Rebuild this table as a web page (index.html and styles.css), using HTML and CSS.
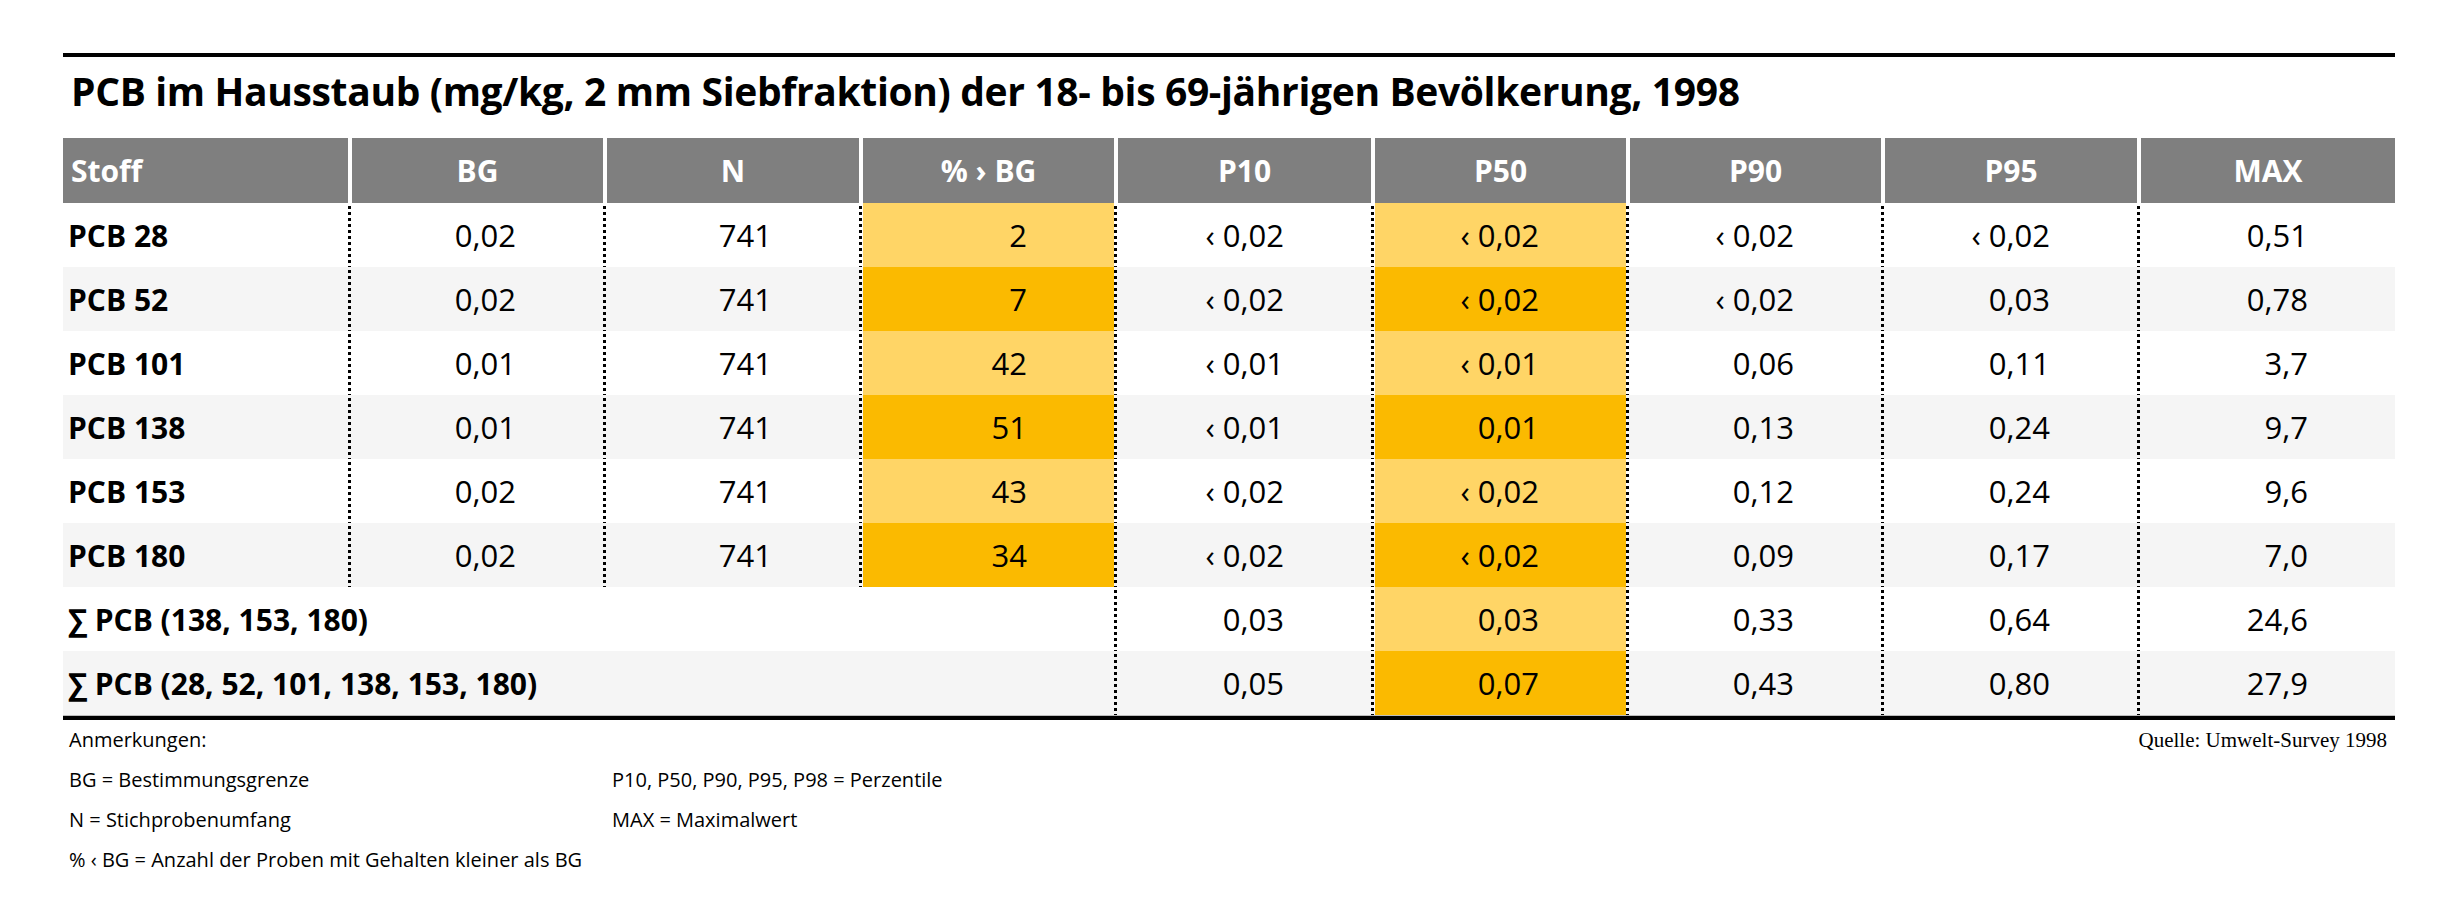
FILE: index.html
```html
<!DOCTYPE html>
<html lang="de">
<head>
<meta charset="utf-8">
<title>PCB im Hausstaub</title>
<link rel="stylesheet" href="styles.css">
</head>
<body>
<div class="page">
  <div class="rule-top"></div>
  <h1 class="title">PCB im Hausstaub (mg/kg, 2 mm Siebfraktion) der 18- bis 69-jährigen Bevölkerung, 1998</h1>

  <div class="table">
    <div class="row head">
      <div class="hc first">Stoff</div>
      <div class="hc">BG</div>
      <div class="hc">N</div>
      <div class="hc">% › BG</div>
      <div class="hc">P10</div>
      <div class="hc">P50</div>
      <div class="hc">P90</div>
      <div class="hc">P95</div>
      <div class="hc">MAX</div>
    </div>

    <div class="row">
      <div class="c name">PCB 28</div>
      <div class="c sep">0,02</div>
      <div class="c sep">741</div>
      <div class="c sep light">2</div>
      <div class="c sep">‹ 0,02</div>
      <div class="c sep light">‹ 0,02</div>
      <div class="c sep">‹ 0,02</div>
      <div class="c sep">‹ 0,02</div>
      <div class="c sep">0,51</div>
    </div>
    <div class="row alt">
      <div class="c name">PCB 52</div>
      <div class="c sep">0,02</div>
      <div class="c sep">741</div>
      <div class="c sep dark">7</div>
      <div class="c sep">‹ 0,02</div>
      <div class="c sep dark">‹ 0,02</div>
      <div class="c sep">‹ 0,02</div>
      <div class="c sep">0,03</div>
      <div class="c sep">0,78</div>
    </div>
    <div class="row">
      <div class="c name">PCB 101</div>
      <div class="c sep">0,01</div>
      <div class="c sep">741</div>
      <div class="c sep light">42</div>
      <div class="c sep">‹ 0,01</div>
      <div class="c sep light">‹ 0,01</div>
      <div class="c sep">0,06</div>
      <div class="c sep">0,11</div>
      <div class="c sep">3,7</div>
    </div>
    <div class="row alt">
      <div class="c name">PCB 138</div>
      <div class="c sep">0,01</div>
      <div class="c sep">741</div>
      <div class="c sep dark">51</div>
      <div class="c sep">‹ 0,01</div>
      <div class="c sep dark">0,01</div>
      <div class="c sep">0,13</div>
      <div class="c sep">0,24</div>
      <div class="c sep">9,7</div>
    </div>
    <div class="row">
      <div class="c name">PCB 153</div>
      <div class="c sep">0,02</div>
      <div class="c sep">741</div>
      <div class="c sep light">43</div>
      <div class="c sep">‹ 0,02</div>
      <div class="c sep light">‹ 0,02</div>
      <div class="c sep">0,12</div>
      <div class="c sep">0,24</div>
      <div class="c sep">9,6</div>
    </div>
    <div class="row alt">
      <div class="c name">PCB 180</div>
      <div class="c sep">0,02</div>
      <div class="c sep">741</div>
      <div class="c sep dark">34</div>
      <div class="c sep">‹ 0,02</div>
      <div class="c sep dark">‹ 0,02</div>
      <div class="c sep">0,09</div>
      <div class="c sep">0,17</div>
      <div class="c sep">7,0</div>
    </div>
    <div class="row">
      <div class="c name span4">∑ PCB (138, 153, 180)</div>
      <div class="c sep">0,03</div>
      <div class="c sep light">0,03</div>
      <div class="c sep">0,33</div>
      <div class="c sep">0,64</div>
      <div class="c sep">24,6</div>
    </div>
    <div class="row alt">
      <div class="c name span4">∑ PCB (28, 52, 101, 138, 153, 180)</div>
      <div class="c sep">0,05</div>
      <div class="c sep dark">0,07</div>
      <div class="c sep">0,43</div>
      <div class="c sep">0,80</div>
      <div class="c sep">27,9</div>
    </div>
    <div class="rule-bottom"></div>
  </div>

  <div class="notes">
    <div class="note-col">
      <div class="note">Anmerkungen:</div>
      <div class="note">BG = Bestimmungsgrenze</div>
      <div class="note">N = Stichprobenumfang</div>
      <div class="note">% ‹ BG = Anzahl der Proben mit Gehalten kleiner als BG</div>
    </div>
    <div class="note-col second">
      <div class="note">P10, P50, P90, P95, P98 = Perzentile</div>
      <div class="note">MAX = Maximalwert</div>
    </div>
    <div class="source">Quelle: Umwelt-Survey 1998</div>
  </div>
</div>
</body>
</html>
```

FILE: styles.css
```css
* { box-sizing: border-box; margin: 0; padding: 0; }

body {
  background: #ffffff;
  color: #000000;
  font-family: "Open Sans", "Noto Sans", sans-serif;
}

.page {
  width: 2395px;
  padding: 53px 0 0 63px;
}

.rule-top {
  height: 4px;
  background: #000;
}

.title {
  margin: 7px 0 20px 8px;
  font-size: 39px;
  line-height: 54px;
  font-weight: 700;
  letter-spacing: -0.35px;
}

.table {
  width: 2332px;
}

.row {
  display: grid;
  grid-template-columns: 285px 255px 256px 255px 257px 255px 255px 256px 1fr;
  height: 64px;
  background: #ffffff;
}

.row.alt { background: #f5f5f5; }

.row.head {
  height: 65px;
  background: #ffffff;
}

.hc {
  display: flex;
  align-items: center;
  justify-content: center;
  padding-left: 4px;
  color: #ffffff;
  font-weight: 700;
  font-size: 30px;
  background: linear-gradient(#7f7f7f, #7f7f7f) right top / calc(100% - 4px) 100% no-repeat;
}

.hc.first {
  justify-content: flex-start;
  padding-left: 8px;
  background: #7f7f7f;
}

.c {
  display: flex;
  align-items: center;
  justify-content: flex-end;
  padding-right: 87px;
  font-size: 31px;
  font-weight: 400;
}

.c.name {
  justify-content: flex-start;
  padding: 0 0 0 5px;
  font-weight: 700;
  font-size: 30px;
}

.c.span4 { grid-column: span 4; }

.c.sep {
  background:
    repeating-linear-gradient(to bottom, #000 0 3px, transparent 3px 6px) left 3px / 3px 100% no-repeat;
}

.c.sep.light {
  background:
    repeating-linear-gradient(to bottom, #000 0 3px, transparent 3px 6px) left 3px / 3px 100% no-repeat,
    linear-gradient(#ffd566, #ffd566) right top / calc(100% - 4px) 100% no-repeat;
}

.c.sep.dark {
  background:
    repeating-linear-gradient(to bottom, #000 0 3px, transparent 3px 6px) left 3px / 3px 100% no-repeat,
    linear-gradient(#fbba00, #fbba00) right top / calc(100% - 4px) 100% no-repeat;
}

.rule-bottom {
  height: 5px;
  border-top: 1px solid #bdbdbd;
  background: #000;
}

.notes {
  display: flex;
  align-items: flex-start;
  padding: 0 8px 0 6px;
  font-size: 20px;
  line-height: 40px;
  font-weight: 400;
}

.note-col {
  width: 543px;
  flex: none;
}

.note-col.second {
  padding-top: 40px;
  flex: 1;
}

.source {
  font-family: "Liberation Serif", "DejaVu Serif", serif;
  font-size: 21px;
  line-height: 40px;
}
```
